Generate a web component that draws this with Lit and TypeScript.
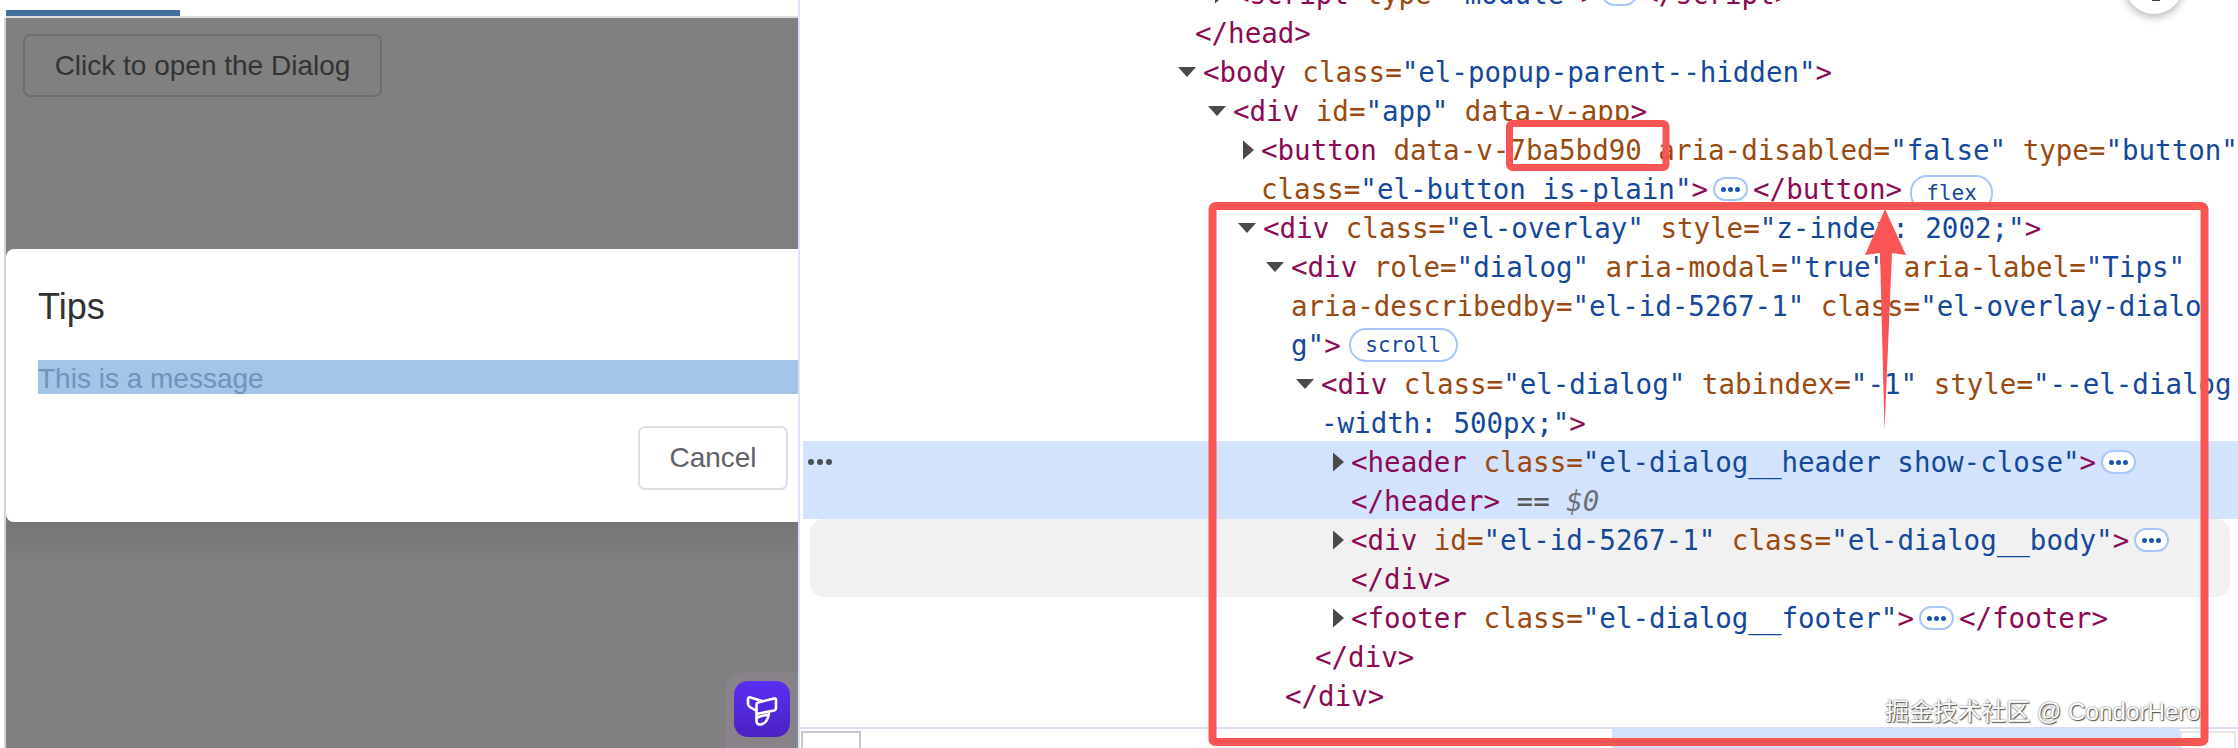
import { LitElement, html, css } from "lit";
import { customElement } from "lit/decorators.js";

const t = (s: string) => html`<span class="tag">${s}</span>`;
const a = (s: string) => html`<span class="attr">${s}</span>`;
const v = (s: string) => html`<span class="val">${s}</span>`;
const dots = html`<span class="pill dotpill"><i></i><i></i><i></i></span>`;
const open = html`<span class="tw down"></span>`;
const closed = html`<span class="tw right"></span>`;

function row(indent: number, content: unknown, tw: unknown = null, after: unknown = null) {
  return html`<div class="row" style="padding-left:${indent}px">${tw}<span class="code">${content}</span>${after}</div>`;
}

@customElement("app-root")
export class AppRoot extends LitElement {
  static styles = css`
    :host { display: block; width: 2238px; height: 748px; overflow: hidden; position: relative; background: #fff; }
    .page { display: flex; width: 2238px; height: 748px; }

    .left { width: 800px; flex: none; height: 748px; display: flex; flex-direction: column; box-sizing: border-box; padding-left: 6px; border-right: 2px solid #dbe4f7; position: relative; font-family: "Liberation Sans", Arial, sans-serif; overflow: hidden; }
    .left::before { content: ""; position: absolute; left: 4px; top: 18px; bottom: 0; width: 2px; background: #d4d4d4; }
    .progress { height: 16px; flex: none; display: flex; align-items: flex-end; }
    .progress div { width: 174px; height: 6px; background: #41709f; }
    .rule { height: 2px; flex: none; background: #dcdcdc; }
    .stage { flex: 1; background: linear-gradient(to bottom, #808080 0, #808080 504px, #767676 504px, #808080 550px); display: flex; flex-direction: column; align-items: flex-start; padding-top: 16px; box-sizing: border-box; }
    .open { margin-left: 17px; box-sizing: border-box; width: 359px; height: 63px; border: 2px solid #6e6e6e; border-radius: 7px; color: #333; font-size: 28px; display: flex; align-items: center; justify-content: center; }
    .dialog { margin-top: 152px; align-self: stretch; height: 273px; background: #fff; border-radius: 8px 0 0 8px; box-sizing: border-box; padding: 38px 0 0 32px; display: flex; flex-direction: column; }
    .title { font-size: 36px; line-height: 40px; color: #303133; }
    .message { margin-top: 33px; height: 34px; line-height: 37px; background: #a2c5e8; color: #7093bc; font-size: 28px; }
    .footer { display: flex; justify-content: flex-end; padding-right: 10px; margin-top: 32px; }
    .cancel { box-sizing: border-box; width: 150px; height: 64px; border: 2px solid #dcdfe6; border-radius: 7px; color: #606266; font-size: 28px; display: flex; align-items: center; justify-content: center; }
    .halo { position: absolute; left: 726px; top: 673px; width: 72px; height: 90px; background: #878388; border-radius: 12px 0 0 0; }
    .logo { position: absolute; left: 734px; top: 681px; width: 56px; height: 56px; border-radius: 14px; background: linear-gradient(#5a2df2, #4a22c2); display: block; }

    .right { flex: 1; min-width: 0; height: 748px; display: flex; flex-direction: column; overflow: hidden; }
    .tree { flex: none; height: 727px; overflow: hidden; font-family: "DejaVu Sans Mono", monospace; font-size: 27.5px; color: #8b0a52; }
    .inner { margin-top: -27px; }
    .row { height: 39px; padding-top: 3px; display: flex; align-items: center; white-space: pre; box-sizing: border-box; }
    .sel { background: #d3e3fd; margin-left: 3px; position: relative; }
    .sel .row { margin-left: -3px; }
    .hover { background: #f1f1f1; margin: 0 8px 0 10px; border-radius: 14px; }
    .hover .row { margin-left: -10px; }
    .tag { color: #8b0a52; }
    .attr { color: #9a4a10; }
    .val { color: #15489a; }
    .eq { color: #5a5a5a; }
    .ref { color: #6c7076; font-style: italic; }
    .tw { flex: none; background: #4a4a4a; }
    .tw.down { width: 18px; height: 10px; margin-left: -25px; margin-right: 7px; clip-path: polygon(0 0, 100% 0, 50% 100%); }
    .tw.right { width: 11px; height: 19px; margin-left: -18px; margin-right: 7px; clip-path: polygon(0 0, 100% 50%, 0 100%); }
    .pill { flex: none; box-sizing: border-box; background: #fff; border: 2px solid #a8c7fa; color: #15489a; display: inline-flex; align-items: center; justify-content: center; font-size: 21px; }
    .dotpill { width: 35px; height: 24px; border-radius: 12px; gap: 2px; margin: 0 5px; }
    .dotpill i { width: 5px; height: 5px; border-radius: 50%; background: #1a56b0; }
    .wordpill { height: 34px; border-radius: 17px; margin-left: 8px; }
    .flex { width: 83px; height: 36px; margin-top: 8px; }
    .scroll { width: 109px; }
    .gutter { position: absolute; left: 5px; top: 18px; display: flex; gap: 3px; }
    .gutter i { width: 6px; height: 6px; border-radius: 50%; background: #4a5055; }

    .bottom { flex: 1; border-top: 2px solid #dadcf0; display: flex; min-height: 0; overflow: hidden; position: relative; }
    .box { flex: none; width: 60px; margin: 2px 0 0 1px; box-sizing: border-box; border: 2px solid #c8c8c8; border-bottom: 0; }
    .crumbs { flex: none; width: 751px; padding: 15px 0 0 24px; box-sizing: border-box; font-family: "DejaVu Sans", sans-serif; font-size: 24px; line-height: 30px; color: #8b0a52; white-space: nowrap; overflow: hidden; }
    .band { flex: none; width: 568px; background: #d3e3fd; }
    .box2 { flex: none; width: 56px; margin-top: 2px; box-sizing: border-box; border: 2px solid #e6e6e6; border-bottom: 0; }

    .fab { position: absolute; left: 2125px; top: -44px; width: 58px; height: 58px; border-radius: 50%; background: #fff; box-shadow: 0 3px 8px rgba(0,0,0,.3); }
    .fab::before { content: ""; position: absolute; left: 27px; bottom: 13px; width: 8px; height: 3px; background: #444; }
    .marks { position: absolute; left: 0; top: 0; width: 2238px; height: 748px; pointer-events: none; }
    .marks rect { fill: none; stroke: #fa5555; }
    .marks polygon { fill: #fa5555; }
    .wm { position: absolute; left: 1885px; top: 694px; font-family: "Liberation Sans", "Noto Sans CJK SC", sans-serif; font-size: 24.2px; line-height: 36px; color: #fff; white-space: nowrap; text-shadow: 0 0 2px #555, 1px 1px 1px #555; }
  `;

  render() {
    return html`
      <div class="page">
        <div class="left">
          <div class="progress"><div></div></div>
          <div class="rule"></div>
          <div class="stage">
            <div class="open">Click to open the Dialog</div>
            <div class="dialog">
              <div class="title">Tips</div>
              <div class="message">This is a message</div>
              <div class="footer"><div class="cancel">Cancel</div></div>
            </div>
          </div>
          <div class="halo"></div>
          <svg class="logo" viewBox="0 0 56 56" fill="none" stroke="#fff" stroke-width="2.6" stroke-linecap="round" stroke-linejoin="round">
            <path d="M21 29 L16 26 Q14 25 14 23 L14 18 Q14 16 16.5 16.5 L28 20"/>
            <path d="M24 21.5 L40 17.5 Q42 17 42 19 L42 27 Q42 29 40 29.5 L25 32.5 Q22.5 33 22.5 30.5 L22.5 24 Q22.5 22 24 21.5"/>
            <path d="M22.5 31 L22.5 40 Q22.5 44 27 43.5 Q34 42 35 31.5"/>
            <path d="M22.5 37 Q27 34.5 34.5 34"/>
          </svg>
        </div>
        <div class="right">
          <div class="tree"><div class="inner">
            ${row(433, html`${t("<script ")}${a("type=")}${v('"module"')}${t(">")}`, closed, html`${dots}<span class="code">${t("</script>")}</span>`)}
            ${row(395, t("</head>"))}
            ${row(403, html`${t("<body ")}${a("class=")}${v('"el-popup-parent--hidden"')}${t(">")}`, open)}
            ${row(433, html`${t("<div ")}${a("id=")}${v('"app"')} ${a("data-v-app")}${t(">")}`, open)}
            ${row(461, html`${t("<button ")}${a("data-v-7ba5bd90 aria-disabled=")}${v('"false"')} ${a("type=")}${v('"button"')}`, closed)}
            ${row(461, html`${a("class=")}${v('"el-button is-plain"')}${t(">")}`, null, html`${dots}<span class="code">${t("</button>")}</span><span class="pill wordpill flex">flex</span>`)}
            ${row(463, html`${t("<div ")}${a("class=")}${v('"el-overlay"')} ${a("style=")}${v('"z-index: 2002;"')}${t(">")}`, open)}
            ${row(491, html`${t("<div ")}${a("role=")}${v('"dialog"')} ${a("aria-modal=")}${v('"true"')} ${a("aria-label=")}${v('"Tips"')}`, open)}
            ${row(491, html`${a("aria-describedby=")}${v('"el-id-5267-1"')} ${a("class=")}${v('"el-overlay-dialo')}`)}
            ${row(491, html`${v("g")}${v('"')}${t(">")}`, null, html`<span class="pill wordpill scroll">scroll</span>`)}
            ${row(521, html`${t("<div ")}${a("class=")}${v('"el-dialog"')} ${a("tabindex=")}${v('"-1"')} ${a("style=")}${v('"--el-dialog')}`, open)}
            ${row(521, html`${v("-width: 500px;")}${v('"')}${t(">")}`)}
            <div class="sel">
              <div class="gutter"><i></i><i></i><i></i></div>
              ${row(551, html`${t("<header ")}${a("class=")}${v('"el-dialog__header show-close"')}${t(">")}`, closed, dots)}
              ${row(551, html`${t("</header>")} <span class="eq">==</span> <span class="ref">$0</span>`)}
            </div>
            <div class="hover">
              ${row(551, html`${t("<div ")}${a("id=")}${v('"el-id-5267-1"')} ${a("class=")}${v('"el-dialog__body"')}${t(">")}`, closed, dots)}
              ${row(551, t("</div>"))}
            </div>
            ${row(551, html`${t("<footer ")}${a("class=")}${v('"el-dialog__footer"')}${t(">")}`, closed, html`${dots}<span class="code">${t("</footer>")}</span>`)}
            ${row(515, t("</div>"))}
            ${row(485, t("</div>"))}
            ${row(479, t("..."))}
          </div></div>
          <div class="bottom">
            <div class="box"></div>
            <div class="crumbs">html body div#app div.el-overlay div.el-overlay-dialog div.el-dialog</div>
            <div class="band"></div>
            <div class="box2"></div>
          </div>
        </div>
      </div>
      <div class="fab"></div>
      <svg class="marks" viewBox="0 0 2238 748">
        <rect x="1212.5" y="206" width="992" height="536" rx="3" stroke-width="8"></rect>
        <rect x="1509.5" y="123.5" width="156.5" height="44" rx="3" stroke-width="7"></rect>
        <polygon points="1885,209 1906,255 1892,253 1884.5,430 1880,253 1865,255"></polygon>
      </svg>
      <div class="wm">掘金技术社区 @ CondorHero</div>
    `;
  }
}
